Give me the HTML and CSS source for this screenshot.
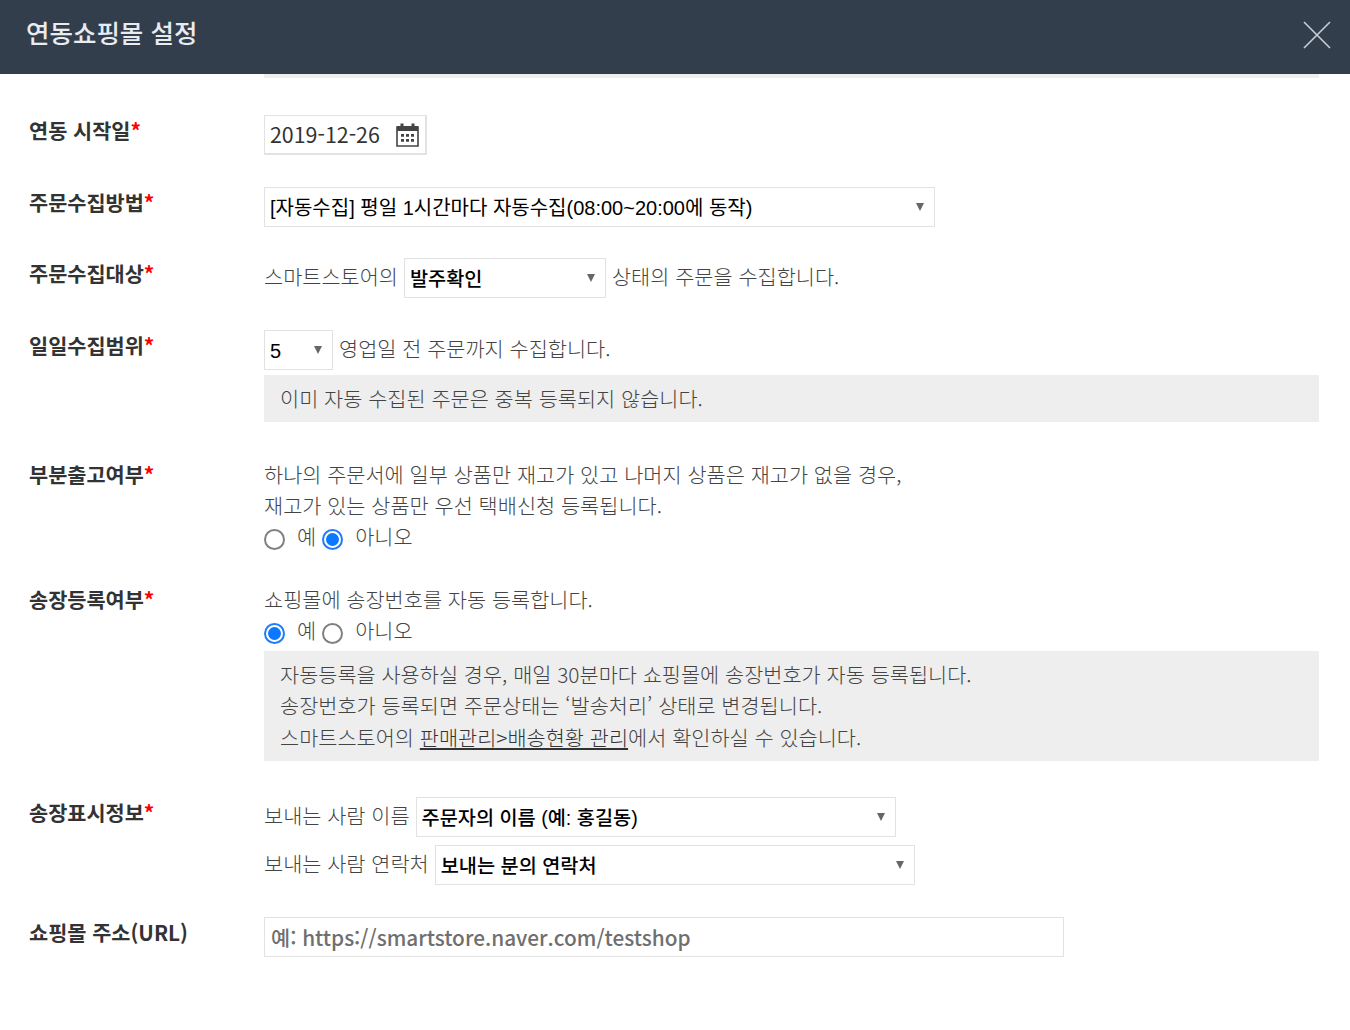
FILE: index.html
```html
<!DOCTYPE html>
<html lang="ko">
<head>
<meta charset="utf-8">
<title>연동쇼핑몰 설정</title>
<link rel="stylesheet" href="styles.css">
</head>
<body>
<header class="top">
  <h1 class="title">연동쇼핑몰 설정</h1>
  <svg class="close" width="28" height="28" viewBox="0 0 28 28" aria-label="닫기"><path d="M1 1L27 27M27 1L1 27" stroke="#c9ced6" stroke-width="1.6" fill="none"/></svg>
</header>
<main class="form">
  <div class="strip"></div>

  <section class="row r-date">
    <div class="label">연동 시작일<span class="req">*</span></div>
    <div class="body">
      <div class="date">
        <span class="date-val">2019-12-26</span>
        <span class="date-btn">
          <svg width="23" height="24" viewBox="0 0 23 24"><path d="M1 4h21v19H1z" fill="none" stroke="#444" stroke-width="1.6"/><path d="M1 3h21v5H1z" fill="#444"/><path d="M4.500 0.500h3v4h-3zM15.500 0.500h3v4h-3z" fill="#444"/><path d="M5 11h3v2.800H5zM10 11h3v2.800h-3zM15 11h3v2.800h-3zM5 16h3v2.800H5zM10 16h3v2.800h-3zM15 16h3v2.800h-3z" fill="#444"/></svg>
        </span>
      </div>
    </div>
  </section>

  <section class="row r-method">
    <div class="label">주문수집방법<span class="req">*</span></div>
    <div class="body">
      <div class="sel w-671"><span class="sel-val">[자동수집] 평일 1시간마다 자동수집(08:00~20:00에 동작)</span></div>
    </div>
  </section>

  <section class="row r-target">
    <div class="label">주문수집대상<span class="req">*</span></div>
    <div class="body inline">
      <span class="txt">스마트스토어의</span>
      <div class="sel w-202"><span class="sel-val strong">발주확인</span></div>
      <span class="txt">상태의 주문을 수집합니다.</span>
    </div>
  </section>

  <section class="row r-range">
    <div class="label">일일수집범위<span class="req">*</span></div>
    <div class="body">
      <div class="inline">
        <div class="sel w-69"><span class="sel-val">5</span></div>
        <span class="txt">영업일 전 주문까지 수집합니다.</span>
      </div>
      <div class="note note-one">이미 자동 수집된 주문은 중복 등록되지 않습니다.</div>
    </div>
  </section>

  <section class="row r-partial">
    <div class="label">부분출고여부<span class="req">*</span></div>
    <div class="body">
      <p class="line">하나의 주문서에 일부 상품만 재고가 있고 나머지 상품은 재고가 없을 경우,</p>
      <p class="line">재고가 있는 상품만 우선 택배신청 등록됩니다.</p>
      <div class="line radios">
        <span class="radio"></span><span class="opt">예</span>
        <span class="radio on"></span><span class="opt">아니오</span>
      </div>
    </div>
  </section>

  <section class="row r-invoice">
    <div class="label">송장등록여부<span class="req">*</span></div>
    <div class="body">
      <p class="line">쇼핑몰에 송장번호를 자동 등록합니다.</p>
      <div class="line radios">
        <span class="radio on"></span><span class="opt">예</span>
        <span class="radio"></span><span class="opt">아니오</span>
      </div>
      <div class="note note-multi">
        <p class="line">자동등록을 사용하실 경우, 매일 30분마다 쇼핑몰에 송장번호가 자동 등록됩니다.</p>
        <p class="line">송장번호가 등록되면 주문상태는 ‘발송처리’ 상태로 변경됩니다.</p>
        <p class="line">스마트스토어의 <a class="link" href="#">판매관리&gt;배송현황 관리</a>에서 확인하실 수 있습니다.</p>
      </div>
    </div>
  </section>

  <section class="row r-display">
    <div class="label">송장표시정보<span class="req">*</span></div>
    <div class="body stack">
      <div class="inline"><span class="txt">보내는 사람 이름</span><div class="sel w-480"><span class="sel-val strong">주문자의 이름 (예: 홍길동)</span></div></div>
      <div class="inline"><span class="txt">보내는 사람 연락처</span><div class="sel w-480"><span class="sel-val strong">보내는 분의 연락처</span></div></div>
    </div>
  </section>

  <section class="row r-url">
    <div class="label">쇼핑몰 주소(URL)</div>
    <div class="body">
      <input class="url" type="text" placeholder="예: https://smartstore.naver.com/testshop">
    </div>
  </section>
</main>
</body>
</html>
```
FILE: styles.css
```css
* { box-sizing: border-box; }
html, body { margin: 0; padding: 0; height: 1030px; overflow: hidden; background: #fff; }
body { font-family: "Noto Sans CJK KR", "Noto Sans", sans-serif; font-size: 20.8px; font-weight: 300; color: #444; line-height: 31.2px; }
p { margin: 0; }
.top { height: 74px; background: #333e4d; display: flex; align-items: center; justify-content: space-between; padding: 0 19px 4px 26px; }
.title { margin: 0 0 2px; font-size: 25.5px; font-weight: 500; color: #e8ebef; line-height: 32px; position: relative; top: -2px; }
.close { display: block; }
.form { padding: 0 31px 0 29px; }
.strip { height: 4px; margin-left: 235px; background: #eee; }
.row { display: grid; grid-template-columns: 235px 1fr; }
.label { font-size: 20.8px; font-weight: 700; color: #333; line-height: 31.2px; }
.req { color: #f00; }
.body { min-width: 0; }
.inline { display: flex; align-items: center; gap: 6px; height: 40px; }
.txt { position: relative; top: -1px; }
.stack { display: flex; flex-direction: column; gap: 8px; }
.r-date { margin-top: 37px; }
.r-method { margin-top: 32px; }
.r-target { margin-top: 31px; }
.r-range { margin-top: 32px; }
.r-partial { margin-top: 37px; }
.r-invoice { margin-top: 31px; }
.r-display { margin-top: 36px; }
.r-url { margin-top: 32px; }
.date { display: flex; width: 163px; height: 40px; border: 2px solid #e2e2e2; border-width: 1px 2px 2px 1px; background: #fff; }
.date-val { flex: 1; padding-left: 5px; font-size: 21.4px; font-weight: 400; color: #333; line-height: 36px; }
.date-btn { width: 29px; display: flex; align-items: center; justify-content: flex-start; }
.sel { position: relative; height: 40px; border: 1px solid #e2e2e2; background: #fff; padding-left: 5px; display: flex; align-items: center; flex: none; }
.sel::after { content: ""; position: absolute; right: 10px; top: 15px; border-style: solid; border-width: 8px 4.5px 0; border-color: #666 transparent transparent; }
.sel-val { color: #000; font-family: "Liberation Sans", "Noto Sans CJK KR", sans-serif; font-weight: 400; font-size: 20px; line-height: 38px; white-space: nowrap; position: relative; top: 1px; }
.strong { font-weight: 500; font-size: 19.7px; }
.w-671 { width: 671px; }
.w-202 { width: 202px; }
.w-69 { width: 69px; }
.w-480 { width: 480px; }
.note { background: #eee; padding: 0 16px; }
.note-one { margin-top: 5px; height: 47px; line-height: 47px; }
.note-multi { margin-top: 5px; padding-top: 8px; height: 110px; }
.line { height: 31.2px; line-height: 31.2px; white-space: nowrap; }
.note-multi .line { height: 31.5px; }
.radios { display: flex; align-items: center; }
.radio { width: 21px; height: 21px; border: 2px solid #808080; border-radius: 50%; background: #fff; flex: none; position: relative; top: 3px; }
.radio.on { border-color: #1a7cff; }
.radio.on::after { content: ""; position: absolute; inset: 2px; border-radius: 50%; background: #0a78ff; }
.opt { margin: 0 6px 0 12px; }
.link { color: #333; text-decoration: underline; }
.url { display: block; width: 800px; height: 40px; border: 1px solid #e2e2e2; padding: 0 6px; font: 500 20.8px "Noto Sans CJK KR", sans-serif; color: #333; outline: none; }
.url::placeholder { color: #6f6f6f; opacity: 1; }
```
